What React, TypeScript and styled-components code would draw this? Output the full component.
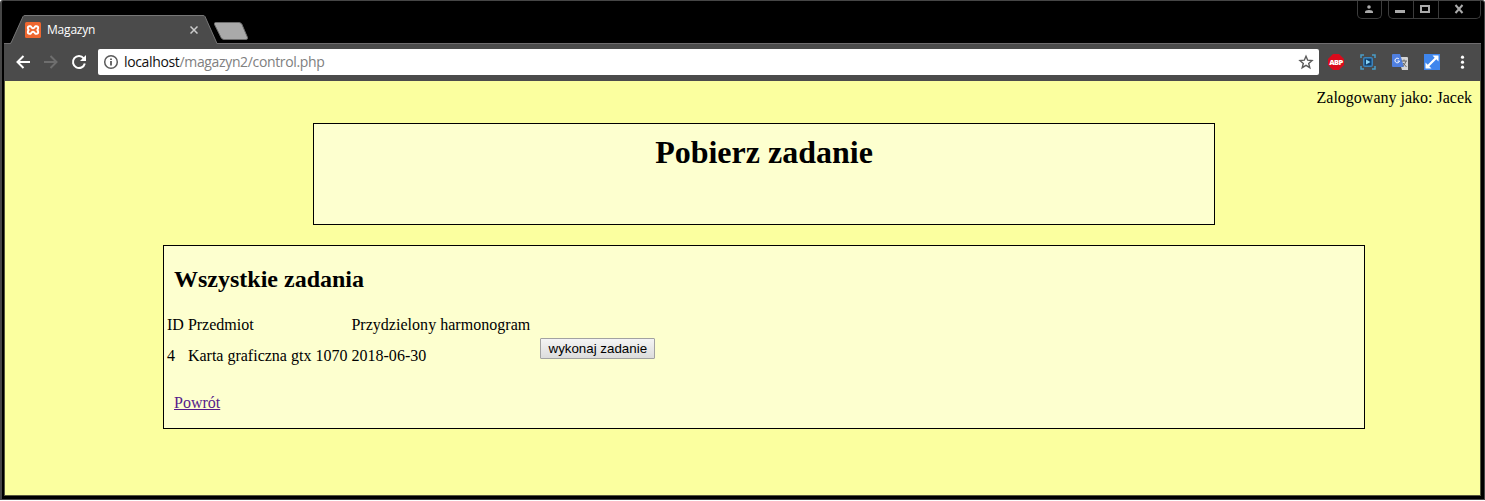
import React from "react";
import styled, { createGlobalStyle } from "styled-components";

const Global = createGlobalStyle`
  * { box-sizing: border-box; }
  body { margin: 0; background: #fff; }
`;

const Window = styled.div`
  width: 1485px;
  height: 500px;
  display: flex;
  flex-direction: column;
  background: #000;
  border: 1px solid #464646;
  border-left-width: 2px;
  border-top-left-radius: 3px;
  border-top-right-radius: 3px;
  padding: 0 3px 3px 2px;
`;

const TitleBar = styled.div`
  height: 43px;
  flex: none;
  display: flex;
  align-items: flex-start;
  border-bottom: 1px solid #6f6d6f;
`;

const Tab = styled.div`
  position: relative;
  width: 208px;
  height: 29px;
  margin: 14px 0 0 6px;
  display: flex;
  align-items: center;
  padding: 0 20px 0 15px;
  color: #fff;
  font: 12px/16px "Open Sans", "Noto Sans", sans-serif;
`;

const TabShape = styled.svg`
  position: absolute;
  left: 0;
  top: 0;
`;

const TabIcon = styled.svg`
  position: relative;
  flex: none;
`;

const TabTitle = styled.span`
  position: relative;
  flex: 1;
  margin-left: 6px;
  letter-spacing: -0.2px;
`;

const NewTab = styled.svg`
  flex: none;
  margin: 20px 0 0 -5px;
`;

const Controls = styled.div`
  margin-left: auto;
  display: flex;
  gap: 6px;
`;

const ControlGroup = styled.div`
  display: flex;
  height: 18px;
  border: 1px solid #3c3c3c;
  border-top: 0;
  border-radius: 0 0 5px 5px;
`;

const Control = styled.div<{ $w: number }>`
  width: ${(p) => p.$w}px;
  display: flex;
  justify-content: center;
  padding-right: 2px;
  & + & { border-left: 1px solid #3c3c3c; }
`;

const Toolbar = styled.div`
  height: 37px;
  flex: none;
  display: flex;
  align-items: center;
  background: #4b4b4b;
  padding: 0 8px 1px 11px;
`;

const NavIcons = styled.div`
  display: flex;
  gap: 12px;
  margin-right: 11px;
`;

const Address = styled.div`
  height: 26px;
  width: 1221px;
  display: flex;
  align-items: center;
  background: #fff;
  border-radius: 2px;
  padding: 0 5px;
  color: #808080;
  font: 14px/20px "Open Sans", "Noto Sans", sans-serif;
`;

const Url = styled.span`
  flex: 1;
  margin-left: 5px;
  letter-spacing: -0.35px;
`;

const Host = styled.span`
  color: #111;
`;

const Extensions = styled.div`
  display: flex;
  gap: 16px;
  margin-left: 9px;
`;

const BlockerBadge = styled.div`
  width: 16px;
  height: 16px;
  display: flex;
  align-items: center;
  justify-content: center;
  background: #d90b1c;
  clip-path: polygon(5px 0, 11px 0, 16px 5px, 16px 11px, 11px 16px, 5px 16px, 0 11px, 0 5px);
  color: #fff;
  font: 800 7.5px/16px "Open Sans", sans-serif;
  letter-spacing: -0.5px;
`;

const Page = styled.main`
  flex: 1;
  display: flex;
  flex-direction: column;
  align-items: center;
  width: 1477px;
  background: #fbff9f;
  border: solid #55563c;
  border-width: 0 1px 1px 1px;
  color: #000;
  font: 16px/18px "Liberation Serif", "Times New Roman", serif;
`;

const Login = styled.div`
  align-self: flex-end;
  padding: 8px 8px 0 0;
  height: 42px;
`;

const Panel = styled.section<{ $w: number; $h: number }>`
  width: ${(p) => p.$w}px;
  height: ${(p) => p.$h}px;
  flex: none;
  background: #fdffcf;
  border: 1px solid #000;
  margin-left: 43px;
`;

const Header = styled(Panel)`
  margin-bottom: 20px;
  text-align: center;
`;

const Title = styled.h1`
  margin: 10px 0 0;
  font-size: 32px;
  line-height: 36px;
`;

const Subtitle = styled.h2`
  margin: 20px 0 0 10px;
  font-size: 24px;
  line-height: 27px;
`;

const TaskArea = styled.div`
  display: flex;
  align-items: flex-start;
  margin: 23px 0 0 3px;
`;

const Tasks = styled.table`
  border-collapse: collapse;
  td { padding: 0 4px 13px 0; white-space: nowrap; }
  td:last-child { letter-spacing: 0.03px; }
`;

const Run = styled.button`
  width: 115px;
  height: 21px;
  margin: 22px 0 0 6px;
  padding: 0;
  border: 1px solid #a2a2a2;
  border-radius: 1px;
  background: linear-gradient(#f4f4f4, #dcdcdc);
  color: #000;
  font: 13.333px/18px "Liberation Sans", Arial, sans-serif;
`;

const Back = styled.a`
  display: inline-block;
  margin: 16px 0 0 10px;
  color: #551a8b;
  text-decoration: underline;
`;

export default function App() {
  return (
    <Window>
      <Global />
      <TitleBar>
        <Tab>
          <TabShape width="208" height="29">
            <path d="M0 28.5L1 28L13 1.5Q13.5 .5 15 .5H193Q194.500 .5 195 1.500L207 28.500V29H0Z" fill="#4b4b4b" />
            <path d="M0 28.5L1 28L13 1.5Q13.5 .5 15 .5H193Q194.500 .5 195 1.500L207 28.500" fill="none" stroke="#777" />
          </TabShape>
          <TabIcon width="16" height="16" viewBox="0 0 16 16">
            <rect width="16" height="16" rx="1.5" fill="#ee6730" />
            <path d="M5.7 4.2H4.5Q2.8 4.2 2.8 6Q2.8 7 3.7 8Q2.8 9 2.8 10Q2.8 11.8 4.5 11.8H5.7L6.8 10.2Q8 9.3 9.2 10.2L10.3 11.8H11.5Q13.2 11.8 13.2 10Q13.2 9 12.3 8Q13.2 7 13.2 6Q13.2 4.2 11.5 4.2H10.3L9.2 5.8Q8 6.7 6.8 5.8Z" fill="none" stroke="#fff" strokeWidth="1.9" strokeLinejoin="round" />
          </TabIcon>
          <TabTitle>Magazyn</TabTitle>
          <TabIcon width="8" height="8"><path d="M.5 .5L7.5 7.5M7.5 .5L.5 7.5" stroke="#ccc" strokeWidth="1.5" /></TabIcon>
        </Tab>
        <NewTab width="36" height="20">
          <path d="M2.5 1.5H26Q28 1.5 29 3.5L34.5 16.5Q35 18.5 33 18.5H11Q9 18.5 8 16.5L1.5 3.5Q1 1.5 2.5 1.5Z" fill="#a9a9a9" stroke="#6c6c6c" />
        </NewTab>
        <Controls>
          <ControlGroup>
            <Control $w={23}>
              <svg width="10" height="18"><circle cx="5" cy="6" r="1.8" fill="#aaa" /><path d="M1 12V11Q1 9 5 9T9 11V12Z" fill="#aaa" /></svg>
            </Control>
          </ControlGroup>
          <ControlGroup>
            <Control $w={24}><svg width="10" height="18"><path d="M0 9H10V12H0Z" fill="#aaa" /></svg></Control>
            <Control $w={25}><svg width="10" height="18"><rect x="1" y="5" width="8" height="6" fill="none" stroke="#aaa" strokeWidth="2" /></svg></Control>
            <Control $w={42}><svg width="10" height="18"><path d="M1.5 4L8.5 12M8.5 4L1.5 12" stroke="#aaa" strokeWidth="2" /></svg></Control>
          </ControlGroup>
        </Controls>
      </TitleBar>
      <Toolbar>
        <NavIcons>
          <svg width="16" height="16"><path d="M8.5 2L2.5 8L8.5 14M2.5 8H15" fill="none" stroke="#fff" strokeWidth="2" /></svg>
          <svg width="16" height="16"><path d="M7.5 2L13.5 8L7.5 14M13.5 8H1" fill="none" stroke="#6e6e6e" strokeWidth="2" /></svg>
          <svg width="16" height="16"><path d="M12.7 4.3A6 6 0 1 0 13.8 9.5" fill="none" stroke="#fff" strokeWidth="2" /><path d="M15 1V7H9Z" fill="#fff" /></svg>
        </NavIcons>
        <Address>
          <svg width="16" height="16"><circle cx="8" cy="8" r="6.3" fill="none" stroke="#5a5a5a" strokeWidth="1.5" /><path d="M7.1 4.5H8.9V6H7.1ZM7.1 7H8.9V11.5H7.1Z" fill="#5a5a5a" /></svg>
          <Url><Host>localhost</Host>/magazyn2/control.php</Url>
          <svg width="16" height="16"><path d="M8 2.2L9.7 6.2L14 6.5L10.7 9.4L11.8 13.7L8 11.4L4.2 13.7L5.3 9.4L2 6.5L6.3 6.2Z" fill="none" stroke="#5a5a5a" strokeWidth="1.4" /></svg>
        </Address>
        <Extensions>
          <BlockerBadge>ABP</BlockerBadge>
          <svg width="16" height="16"><path d="M1 4V1H4M12 1H15V4M15 12V15H12M4 15H1V12" fill="none" stroke="#4a9dc8" strokeWidth="1.5" /><rect x="3" y="3" width="10" height="10" rx="2" fill="#3c85bd" /><path d="M4.5 4.5H11.5V11.5H4.5Z" fill="#10406f" /><path d="M6 5.5L10.5 8L6 10.5Z" fill="#8bd5f4" /></svg>
          <svg width="16" height="16"><path d="M6 3H15Q16 3 16 4V16H10Z" fill="#d5d5d5" /><path d="M1 0H8L12 13H1Q0 13 0 12V1Q0 0 1 0Z" fill="#4f7fe0" /><path d="M7 5A2.3 2.3 0 1 0 7.5 7H5.5" fill="none" stroke="#fff" /><path d="M9.5 7H15M12 5.5V7M14 7Q13 11 10.5 12M11 9L14.5 13" fill="none" stroke="#666" /></svg>
          <svg width="16" height="16"><rect width="16" height="16" fill="#3f86ed" /><path d="M14.5 1.5V7.5L12.3 5.3L5.3 12.3L7.5 14.5H1.5V8.5L3.7 10.7L10.7 3.7L8.5 1.5Z" fill="#fff" /></svg>
          <svg width="14" height="16"><g fill="#fff"><circle cx="6.5" cy="3.2" r="1.6" /><circle cx="6.5" cy="8.2" r="1.6" /><circle cx="6.5" cy="13.2" r="1.6" /></g></svg>
        </Extensions>
      </Toolbar>
      <Page>
        <Login>Zalogowany jako: Jacek</Login>
        <Header $w={902} $h={102}><Title>Pobierz zadanie</Title></Header>
        <Panel $w={1202} $h={184}>
          <Subtitle>Wszystkie zadania</Subtitle>
          <TaskArea>
            <Tasks>
              <tbody>
                <tr><td>ID</td><td>Przedmiot</td><td>Przydzielony harmonogram</td></tr>
                <tr><td>4</td><td>Karta graficzna gtx 1070</td><td>2018-06-30</td></tr>
              </tbody>
            </Tasks>
            <Run>wykonaj zadanie</Run>
          </TaskArea>
          <Back href="#">Powrót</Back>
        </Panel>
      </Page>
    </Window>
  );
}
